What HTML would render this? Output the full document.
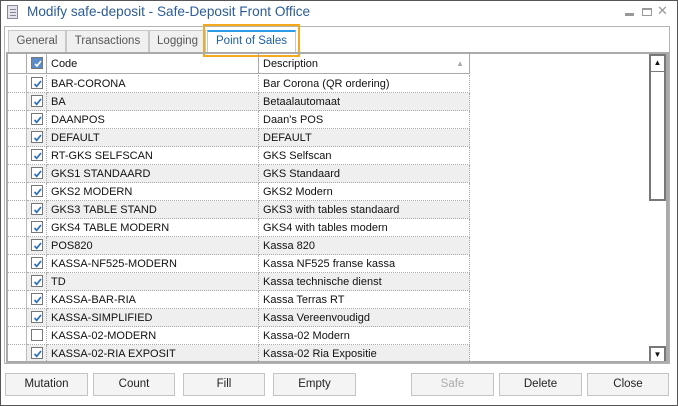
<!DOCTYPE html>
<html><head><style>
*{box-sizing:border-box;margin:0;padding:0}
body{width:678px;height:406px;overflow:hidden;background:#fff;font-family:"Liberation Sans",sans-serif;font-size:11px;color:#111;position:relative}
.win{position:absolute;left:0;top:0;width:678px;height:406px;border:1px solid #555}
.title{position:absolute;left:27px;top:4px;font-size:13.6px;color:#2c5c96}
.ico{position:absolute;left:7px;top:5px;width:11px;height:14px;border:1px solid #889;background:#e4e4ea}
.ico i{position:absolute;left:2px;width:6px;height:1px;background:#889}
.ctl{position:absolute;top:9px;color:#999}
.panel{position:absolute;left:4px;top:26px;width:666px;height:338px;border:1px solid #b4b4b4}
.tab{position:absolute;top:30px;height:22px;border:1px solid #c8c8c8;border-bottom:none;background:#f0f0f0;color:#555;text-align:center;line-height:21px;font-size:11.5px}
.sel{background:#fff;color:#1d5fa8;border-top:2px solid #2b9de6;line-height:19px}
.hl{position:absolute;left:203px;top:24px;width:97px;height:33px;border:2px solid #f4a81c}
.grid{position:absolute;left:6px;top:52px;width:663px;height:311px;border:2px solid #aaa;border-right:3px solid #aaa;overflow:hidden}
.row{position:absolute;left:0;height:18px;width:462px}
.row div{position:absolute;top:0;height:18px;line-height:18px;border-right:1px dotted #aaa;border-bottom:1px dotted #aaa}
.a{left:0;width:19px;border-right:1px solid #bbb!important}
.b{left:19px;width:20px}
.c{left:39px;width:212px;padding-left:4px}
.d{left:251px;width:211px;padding-left:4px}
.alt .b,.alt .c,.alt .d{background:#efefef}
.cb{position:absolute;left:4px;top:2px;width:12px;height:12px;border:1px solid #777;background:#fff}
.cb svg{position:absolute;left:1px;top:1px}
.hdr div{border-bottom:1px solid #aaa!important;border-right:1px solid #aaa!important;height:20px;line-height:20px}
.sbb{position:absolute;left:641px;width:17px;border:2px solid #777;background:#fff;text-align:center;font-size:8px}
.btn{position:absolute;top:373px;height:23px;border:1px solid #c4c4c4;background:#f4f4f4;text-align:center;line-height:21px;font-size:11.5px;color:#222}
</style></head><body>
<div class="win"></div>
<div class="ico"><i style="top:3px"></i><i style="top:6px"></i><i style="top:9px"></i></div>
<div class="title">Modify safe-deposit - Safe-Deposit Front Office</div>
<div class="ctl" style="left:625px;top:13px;width:9px;height:3px;background:#999"></div>
<div class="ctl" style="left:642px;top:8px;width:10px;height:8px;border:1px solid #999;border-top-width:2px"></div>
<div class="ctl" style="left:657px;top:3px;font-size:13px">✕</div>
<div class="panel"></div>
<div class="tab" style="left:8px;width:58px">General</div>
<div class="tab" style="left:66px;width:83px">Transactions</div>
<div class="tab" style="left:149px;width:57px">Logging</div>
<div class="tab sel" style="left:207px;width:89px">Point of Sales</div>
<div class="hl"></div>
<div class="grid">
<div class="row hdr" style="top:0"><div class="a"></div><div class="b"><span class="cb" style="background:#5b8bc9;top:3px"><svg width="10" height="10"><path d="M2 5l2 2 4-5" stroke="#fff" stroke-width="1.6" fill="none"/></svg></span></div><div class="c">Code</div><div class="d">Description<span style="position:absolute;right:5px;top:0;color:#aaa;font-size:8px">▲</span></div></div>
<div id="rows"></div>
<div class="sbb" style="top:0;height:18px;line-height:14px;border-bottom-width:1px">▲</div>
<div class="sbb" style="top:17px;height:130px;border-top-width:1px"></div>
<div class="sbb" style="top:292px;height:17px;line-height:13px">▼</div>
</div>
<div class="btn" style="left:5px;width:83px">Mutation</div>
<div class="btn" style="left:93px;width:82px">Count</div>
<div class="btn" style="left:183px;width:82px">Fill</div>
<div class="btn" style="left:273px;width:83px">Empty</div>
<div class="btn" style="left:411px;width:83px;color:#aaa">Safe</div>
<div class="btn" style="left:499px;width:83px">Delete</div>
<div class="btn" style="left:587px;width:82px">Close</div>
<script>
var d=[["BAR-CORONA","Bar Corona (QR ordering)",1],["BA","Betaalautomaat",1],["DAANPOS","Daan's POS",1],["DEFAULT","DEFAULT",1],["RT-GKS SELFSCAN","GKS Selfscan",1],["GKS1 STANDAARD","GKS Standaard",1],["GKS2 MODERN","GKS2 Modern",1],["GKS3 TABLE STAND","GKS3 with tables standaard",1],["GKS4 TABLE MODERN","GKS4 with tables modern",1],["POS820","Kassa 820",1],["KASSA-NF525-MODERN","Kassa NF525 franse kassa",1],["TD","Kassa technische dienst",1],["KASSA-BAR-RIA","Kassa Terras RT",1],["KASSA-SIMPLIFIED","Kassa Vereenvoudigd",1],["KASSA-02-MODERN","Kassa-02 Modern",0],["KASSA-02-RIA EXPOSIT","Kassa-02 Ria Expositie",1]];
var h="";d.forEach(function(r,i){h+='<div class="row'+(i%2?' alt':'')+'" style="top:'+(21+i*18)+'px"><div class="a"></div><div class="b"><span class="cb">'+(r[2]?'<svg width="10" height="10"><path d="M1.5 5l2.2 2.3L8 2" stroke="#2b6fc0" stroke-width="1.7" fill="none"/></svg>':'')+'</span></div><div class="c">'+r[0]+'</div><div class="d">'+r[1]+'</div></div>';});
document.getElementById("rows").innerHTML=h;
</script>
</body></html>
